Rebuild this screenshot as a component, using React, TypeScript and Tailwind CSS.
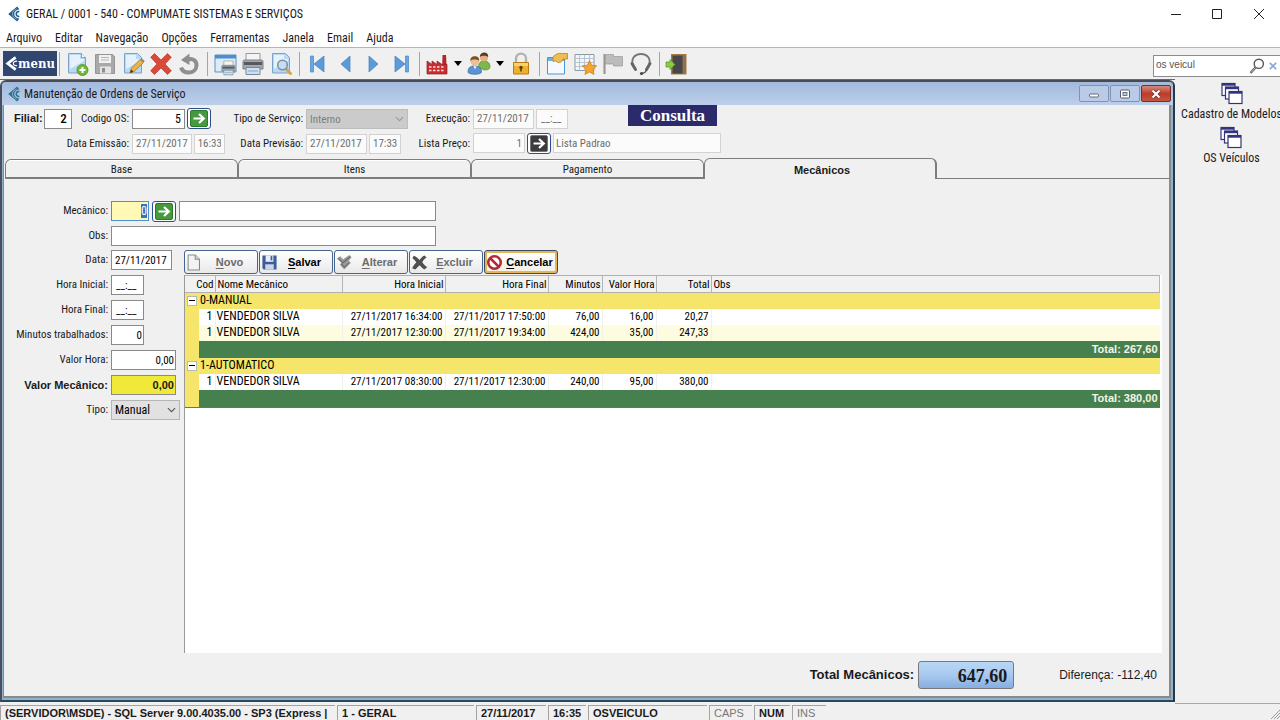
import { useEffect, useRef, type ReactNode } from "react";

const fieldBase =
  "h-5 min-w-0 border px-1 text-[11px] leading-4 outline-none rounded-none";
const fieldActive = fieldBase + " border-[#8a8a8a] bg-white text-black";
const fieldMuted = fieldBase + " border-[#d2d2d2] bg-[#fbfbfb] text-[#6e6e6e]";

/* ---------- icons ---------- */

function Logo({ className, color }: { className: string; color: string }) {
  return (
    <svg viewBox="0 0 13 18" className={className} aria-hidden="true">
      <path d="M0 9L10 .5l2.500 3.200Q6.800 5 6.800 9t5.700 5.300L10 17.500z" fill={color} />
      <path d="M12.500 6Q9 6.500 9 9t3.500 3" fill="none" stroke={color} strokeWidth="1.700" />
      <path d="M9.500 3.200Q4.600 5 4.600 9t4.900 5.800" fill="none" stroke="#d5e4ee" strokeWidth=".6" />
    </svg>
  );
}

function Svg({ children, size = "size-6" }: { children: ReactNode; size?: string }) {
  return (
    <svg viewBox="0 0 24 24" className={size} fill="none" aria-hidden="true">
      {children}
    </svg>
  );
}

const Page = () => (
  <path d="M3.500 1.500h13l4 4v15.500h-17z" fill="#b9d8f2" stroke="#7ba3c9" />
);

const NewIcon = () => (
  <Svg>
    <Page />
    <path d="M5 3h10v4h4v2L5 17z" fill="#e6f2fb" />
    <path d="M16.500 1.500v4h4" fill="#fff" stroke="#7ba3c9" />
    <circle cx="17.500" cy="18" r="5.500" fill="#6fb63c" stroke="#4e8f25" strokeWidth=".8" />
    <path d="M17.500 15v6M14.500 18h6" stroke="#fff" strokeWidth="2" />
  </Svg>
);
const SaveIcon = () => (
  <Svg>
    <path d="M2.500 2.500h17l2 2v17h-19z" fill="#a9a9a9" stroke="#959595" />
    <path d="M6 3h12v8H6z" fill="#f1f1f1" />
    <path d="M8 5.500h8M8 8h8" stroke="#b5b5b5" />
    <path d="M7 14.500h11v7H7z" fill="#e4e4e4" />
    <path d="M9 16h3v4.500H9z" fill="#8e8e8e" />
  </Svg>
);
const EditIcon = () => (
  <Svg>
    <Page />
    <path d="M5 3h10v4h4v2L5 17z" fill="#e6f2fb" />
    <path d="M9 21l1.500-5L19 7.500l3.500 3L13 19.500z" fill="#eeb24a" stroke="#a8742a" strokeWidth=".8" />
    <path d="M9 21l1-3.500 2.500 2.300z" fill="#4a3a2a" />
    <path d="M19 7.500l1.500-1.500 3.300 3-1.500 1.500z" fill="#8d8d8d" />
  </Svg>
);
const DeleteIcon = () => (
  <Svg>
    <path d="M5.500 1.500L12 8 18.500 1.500 22.300 5.300 16 12 22.300 18.800 18.500 22.500 12 16 5.500 22.500 1.700 18.800 8 12 1.700 5.300z" fill="#d94a3a" stroke="#b8362a" strokeWidth=".7" />
  </Svg>
);
const UndoIcon = () => (
  <Svg>
    <path d="M11 7.500c5-1.500 8.500 1.500 8.500 5.700 0 4.300-3.500 7.300-8 7.300-3.500 0-6.500-2-7.500-5" stroke="#8f8f8f" strokeWidth="4" />
    <path d="M12.500 1.500v11.500L4 8z" fill="#8f8f8f" />
  </Svg>
);
const PrinterBody = ({ t }: { t?: string }) => (
  <g transform={t}>
    <path d="M5 1.500h14V9H5z" fill="#f4f4f4" stroke="#999" />
    <path d="M2 9.500q0-1.500 1.500-1.500h17q1.500 0 1.500 1.500v7.500H2z" fill="#a4a8ad" stroke="#7c8086" />
    <path d="M3 10h18v3H3z" fill="#555a61" />
    <path d="M5 15.500h14v7H5z" fill="#c9e0f5" stroke="#7b8794" />
    <path d="M7 19h10" stroke="#86a9c6" />
  </g>
);
const PrintPreviewIcon = () => (
  <Svg>
    <path d="M2 3h21v17H2z" fill="#dcebf8" stroke="#5b8fc4" />
    <path d="M2 3h21v3.500H2z" fill="#4c8ed0" />
    <PrinterBody t="translate(7.500 8) scale(.66)" />
  </Svg>
);
const PrintIcon = () => (
  <Svg>
    <PrinterBody />
  </Svg>
);
const FindIcon = () => (
  <Svg>
    <Page />
    <path d="M5 3h10v4h4v2L5 17z" fill="#e6f2fb" />
    <path d="M17 17l4.500 4.500" stroke="#d9a050" strokeWidth="3" strokeLinecap="round" />
    <circle cx="13.500" cy="13" r="4.800" fill="#c4def5" stroke="#7d8e9d" strokeWidth="1.500" />
  </Svg>
);
const FirstIcon = () => (
  <Svg>
    <path d="M5.500 4h3v16h-3z" fill="#6ba6df" stroke="#4a84c0" strokeWidth=".7" />
    <path d="M19 4v16L9 12z" fill="#5b9bd8" stroke="#3f7fc0" strokeWidth=".7" />
  </Svg>
);
const PrevIcon = () => (
  <Svg>
    <path d="M17 4v16L8 12z" fill="#5b9bd8" stroke="#3f7fc0" strokeWidth=".7" />
  </Svg>
);
const NextIcon = () => (
  <Svg>
    <path d="M8 4v16l9-8z" fill="#5b9bd8" stroke="#3f7fc0" strokeWidth=".7" />
  </Svg>
);
const LastIcon = () => (
  <Svg>
    <path d="M16.500 4h3v16h-3z" fill="#6ba6df" stroke="#4a84c0" strokeWidth=".7" />
    <path d="M6 4v16l10-8z" fill="#5b9bd8" stroke="#3f7fc0" strokeWidth=".7" />
  </Svg>
);
const FactoryIcon = () => (
  <Svg>
    <path d="M17.500 3h3.500l1 18h-5z" fill="#b3262a" />
    <path d="M2 9l5 3.500V9l5 3.500V9l5 3.500h5V22H2z" fill="#c92f31" stroke="#8f1d20" strokeWidth=".7" />
    <path d="M4 15h16M4 18.500h16" stroke="#f7dede" strokeWidth="1.600" strokeDasharray="2.500 1.500" />
  </Svg>
);
const UsersIcon = () => (
  <Svg>
    <path d="M11.500 15c0-4 2-6 5.500-6s6 2 6 5.500-4 3.500-6 3.500z" fill="#7cb94a" stroke="#518a2a" strokeWidth=".7" />
    <circle cx="17" cy="5.500" r="4" fill="#e3b083" />
    <path d="M12.800 5c0-3 2-4.500 4.500-4.500S21.500 2 21.200 5c-2-1.500-6-2-8.400 0z" fill="#5c3a1c" />
    <path d="M1 20c0-4.500 2.500-6 6.500-6s7 1.500 7 6c0 3-13.500 3-13.500 0z" fill="#5c93d2" stroke="#35679f" strokeWidth=".7" />
    <circle cx="7.800" cy="9.500" r="4.300" fill="#ecc095" />
    <path d="M3.300 9c0-3.500 2-4.800 4.700-4.800s4.500 1.500 4.200 4.800c-2-1.800-6.500-2-8.900 0z" fill="#7a5025" />
    <path d="M6.500 14.200h3l-1.500 3z" fill="#fff" />
  </Svg>
);
const LockIcon = () => (
  <Svg>
    <path d="M7 12V6.500C7 0 17 0 17 6.500V12" stroke="#b3b3ad" strokeWidth="2.400" />
    <path d="M4.500 10.500h15V22h-15z" fill="#eeb02e" stroke="#b57d14" />
    <path d="M5 11h14v3H5z" fill="#f8d26c" />
    <circle cx="12" cy="15.500" r="1.700" fill="#5a4210" />
    <path d="M11.200 15.500h1.600v4h-1.600z" fill="#5a4210" />
  </Svg>
);
const NoteIcon = () => (
  <Svg>
    <path d="M2.500 5.500h17V22h-17z" fill="#f4faff" stroke="#4d95d6" />
    <path d="M3 6h16v3H3z" fill="#6cb0ea" />
    <path d="M8 5c3-3.500 6-4 9-3.500h5.500V7H18c-1 3-3 4-5 3.500L11 9 8 9.500z" fill="#efbd52" stroke="#b98425" strokeWidth=".8" />
  </Svg>
);
const FavoriteGridIcon = () => (
  <Svg>
    <path d="M2 2.500h19v16H2z" fill="#f4f6f8" stroke="#8a97a5" />
    <path d="M2 6.500h19M2 10.500h19M2 14.500h19M6.500 2.500v16M11.500 2.500v16M16.500 2.500v16" stroke="#b4bfca" strokeWidth=".9" />
    <path d="M16.500 8.500l2.200 4.700 5 .6-3.700 3.500 1 5.200-4.500-2.600-4.500 2.600 1-5.200-3.700-3.500 5-.6z" fill="#f6a42b" stroke="#c7741a" strokeWidth=".7" />
  </Svg>
);
const FlagIcon = () => (
  <Svg>
    <path d="M3.500 2v20" stroke="#999" strokeWidth="2.200" />
    <path d="M4.500 2.500h8v2h9v9.500h-9v-2h-8z" fill="#bcbcbc" stroke="#9a9a9a" strokeWidth=".7" />
  </Svg>
);
const HeadsetIcon = () => (
  <Svg>
    <path d="M4.500 15C1 6.500 6 2 12 2s11 4.500 7.500 13" stroke="#777" strokeWidth="1.900" />
    <path d="M3 11.500l3.500 6M21 11.500l-3.500 6" stroke="#666" strokeWidth="3" strokeLinecap="round" />
    <path d="M18 17.500c-1 2.500-2.500 3.500-5 4" stroke="#555" strokeWidth="1.300" />
    <circle cx="12.500" cy="21.500" r="1.600" fill="#444" />
  </Svg>
);
const ExitIcon = () => (
  <Svg>
    <path d="M6 2h15.500v20.500H6z" fill="#a9783f" />
    <path d="M7.500 3.500h11v18h-11z" fill="#47474b" />
    <path d="M17.500 3v19l3.500-1V3.500z" fill="#8b7355" />
    <path d="M1 10h4V7.500l5 5-5 5V15H1z" fill="#8ccc45" stroke="#578f23" strokeWidth=".7" />
  </Svg>
);
const Caret = () => (
  <svg viewBox="0 0 8 5" className="h-[5px] w-2" aria-hidden="true">
    <path d="M0 0h8L4 5z" fill="#000" />
  </svg>
);
const CascadeIcon = () => (
  <svg viewBox="0 0 22 22" className="h-[23px] w-[22px]" aria-hidden="true">
    {[[1, 1], [4.500, 4.500], [8, 9]].map(([x, y]) => (
      <g key={x}>
        <rect x={x} y={y} width="13" height="12" fill="#fff" stroke="#34347c" strokeWidth="1.200" />
        <rect x={x} y={y} width="13" height="2.200" fill="#34347c" />
      </g>
    ))}
  </svg>
);
const ChevronDown = ({ color }: { color: string }) => (
  <svg viewBox="0 0 10 6" className="pointer-events-none absolute top-[7px] right-1 h-[6px] w-[9px]" aria-hidden="true">
    <path d="M1 .8l4 4 4-4" fill="none" stroke={color} strokeWidth="1.200" />
  </svg>
);

/* small glyphs of the grid's command buttons */
const CmdNew = () => (
  <Svg size="size-[17px]">
    <path d="M3 1.500h10l6 6V22.500H3z" fill="#f3f3f3" stroke="#8a8a8a" strokeWidth="1.500" />
    <path d="M13 1.500v6h6" fill="#dadada" stroke="#8a8a8a" strokeWidth="1.500" />
  </Svg>
);
const CmdSave = () => (
  <Svg size="size-[17px]">
    <path d="M2 2h20v20H4l-2-2z" fill="#3d5c98" />
    <path d="M6.500 2h11v9h-11z" fill="#e9eef8" />
    <path d="M13.500 3h2.500v6h-2.500z" fill="#3d5c98" />
    <path d="M6 14.500h12V22H6z" fill="#c9d5ea" />
  </Svg>
);
const CmdEdit = () => (
  <Svg size="size-[17px]">
    <path d="M1 6.500l5-3.500 4 4.500L19 1.500l3 3-4 5 3 3-9.500 9.500-6-7 2.500-3z" fill="#9a9a9a" />
    <path d="M3.500 6.500l6 6L20 4M7.500 14l4.500 4.500 6.500-6" stroke="#6f6f6f" strokeWidth="1.800" />
  </Svg>
);
const CmdDelete = () => (
  <Svg size="size-[17px]">
    <path d="M4 2.500c3 1 6 4 8 6 2-3 4-5 7-6.500l3 3c-3 2-5 4-6 6.500 2 3 4 5 7 7l-4 3.500c-3-2-5-4-7-6-2 2-4 4-6 6l-4.500-2c2-4 4-6 6-8.500-2-2.500-3.500-4-5.500-6z" fill="#4f4f4f" />
  </Svg>
);
const CmdCancel = () => (
  <Svg size="size-[17px]">
    <circle cx="12" cy="12" r="8.800" fill="#fff" stroke="#b32a35" strokeWidth="3.600" />
    <path d="M6 6l12 12" stroke="#b32a35" strokeWidth="3.600" />
  </Svg>
);

/* ---------- parts ---------- */

function ToolButton({ label, children }: { label: string; children: ReactNode }) {
  return (
    <button type="button" aria-label={label} className="flex h-7 w-7 items-center justify-center">
      {children}
    </button>
  );
}
const DropButton = ({ label }: { label: string }) => (
  <button type="button" aria-label={label} className="flex h-7 w-[14px] items-center justify-center">
    <Caret />
  </button>
);
const Separator = () => <span className="mr-[3px] ml-1 h-6 w-px bg-[#a5a5a5]" />;

function GoButton({ label, dark = false }: { label: string; dark?: boolean }) {
  return (
    <button
      type="button"
      aria-label={label}
      className="flex h-[21px] w-6 shrink-0 items-center justify-center rounded-[3px] border border-[#2f4f8a] bg-white"
    >
      <svg viewBox="0 0 18 17" className="h-[17px] w-[18px]" aria-hidden="true">
        <rect x=".5" y=".5" width="17" height="16" rx="1.500" fill={dark ? "#3b3b3d" : "#449a3c"} stroke={dark ? "#777" : "#2f7a2b"} />
        <path d="M3.500 8.500h9.500M9 4l4.800 4.500L9 13" fill="none" stroke="#fff" strokeWidth="2.200" />
      </svg>
    </button>
  );
}

type CmdProps = { first: string; rest: string; icon: ReactNode; tone?: "off" | "on" | "focus" };
function Command({ first, rest, icon, tone = "off" }: CmdProps) {
  const skin = {
    off: "border-[#47648f] bg-linear-to-b from-white to-[#e9e9e9] text-[#6c6c6c]",
    on: "border-[#47648f] bg-linear-to-b from-white to-[#e9e9e9] text-black",
    focus: "border-[#3a4a66] bg-linear-to-b from-white to-[#f3efe2] text-black ring-2 ring-inset ring-[#e3b65a]",
  }[tone];
  return (
    <button
      type="button"
      disabled={tone === "off"}
      className={`flex h-6 w-[74px] items-center rounded-[3px] border pr-px pl-px font-['Liberation_Sans',sans-serif] text-[11px] font-bold ${skin}`}
    >
      {icon}
      <span className="flex-1 text-center">
        <span className="underline underline-offset-2">{first}</span>
        {rest}
      </span>
    </button>
  );
}

function FormRow({ id, label, bold = false, children }: { id: string; label: string; bold?: boolean; children: ReactNode }) {
  return (
    <div className="flex h-5 items-center gap-[3px]">
      <label
        htmlFor={id}
        className={
          bold
            ? "w-[103px] shrink-0 text-right font-['Liberation_Sans',sans-serif] font-bold whitespace-nowrap"
            : "w-[103px] shrink-0 pt-px text-right whitespace-nowrap"
        }
      >
        {label}
      </label>
      {children}
    </div>
  );
}

/* ---------- data ---------- */

const menus = ["Arquivo", "Editar", "Navegação", "Opções", "Ferramentas", "Janela", "Email", "Ajuda"];

type Entry = { cod: string; nome: string; inicio: string; fim: string; minutos: string; valor: string; total: string };
const groups: { name: string; total: string; rows: Entry[] }[] = [
  {
    name: "0-MANUAL",
    total: "Total: 267,60",
    rows: [
      { cod: "1", nome: "VENDEDOR SILVA", inicio: "27/11/2017 16:34:00", fim: "27/11/2017 17:50:00", minutos: "76,00", valor: "16,00", total: "20,27" },
      { cod: "1", nome: "VENDEDOR SILVA", inicio: "27/11/2017 12:30:00", fim: "27/11/2017 19:34:00", minutos: "424,00", valor: "35,00", total: "247,33" },
    ],
  },
  {
    name: "1-AUTOMATICO",
    total: "Total: 380,00",
    rows: [
      { cod: "1", nome: "VENDEDOR SILVA", inicio: "27/11/2017 08:30:00", fim: "27/11/2017 12:30:00", minutos: "240,00", valor: "95,00", total: "380,00" },
    ],
  },
];

/* ---------- page sections ---------- */

function ServiceHeader() {
  return (
    <div className="grid grid-cols-[124px_93px_75px_102px_59px_minmax(0,1fr)] grid-rows-[27px_21px] items-center gap-x-[3px] gap-y-px">
      <div className="flex items-center justify-between pl-[9px]">
        <span className="flex items-center gap-px">
          <label htmlFor="filial" className="font-['Liberation_Sans',sans-serif] font-bold">Filial:</label>
          <input id="filial" defaultValue="2" className={`${fieldActive} w-7 text-right text-[13px]! font-medium`} />
        </span>
        <label htmlFor="os" className="pt-[2px]">Codigo OS:</label>
      </div>
      <div className="flex items-center gap-[2px]">
        <input id="os" defaultValue="5" className={`${fieldActive} w-[53px] px-[3px]! text-right text-[12px]!`} />
        <GoButton label="Buscar OS" />
      </div>
      <label htmlFor="tipo-servico" className="pt-[2px] text-right">Tipo de Serviço:</label>
      <div className="relative">
        <select id="tipo-servico" disabled className="h-5 w-full appearance-none border border-[#bdbdbd] bg-[#cbcbcb] px-[3px] pt-[2px] text-[11px] text-[#7d7d7d] opacity-100">
          <option>Interno</option>
        </select>
        <ChevronDown color="#999" />
      </div>
      <label htmlFor="execucao" className="pt-[2px] text-right">Execução:</label>
      <div className="flex h-full items-center gap-[2px]">
        <input id="execucao" defaultValue="27/11/2017" className={`${fieldMuted} w-[61px] px-[3px]!`} />
        <input aria-label="Hora de execução" defaultValue="__:__" className={`${fieldMuted} w-8`} />
        <strong className="ml-[58px] flex h-[21px] w-[89px] items-center justify-center self-start bg-[#2b2b6b] font-['Liberation_Serif',serif] text-[17px] leading-5 text-white">
          Consulta
        </strong>
      </div>

      <label htmlFor="emissao" className="pt-[2px] text-right">Data Emissão:</label>
      <div className="flex gap-[2px]">
        <input id="emissao" defaultValue="27/11/2017" className={`${fieldMuted} w-[61px] px-[3px]!`} />
        <input aria-label="Hora de emissão" defaultValue="16:33" className={`${fieldMuted} w-8 px-[3px]!`} />
      </div>
      <label htmlFor="previsao" className="pt-[2px] text-right">Data Previsão:</label>
      <div className="flex gap-[2px]">
        <input id="previsao" defaultValue="27/11/2017" className={`${fieldMuted} w-[61px] px-[3px]!`} />
        <input aria-label="Hora prevista" defaultValue="17:33" className={`${fieldMuted} w-8 px-[3px]!`} />
      </div>
      <label htmlFor="lista" className="pt-[2px] text-right">Lista Preço:</label>
      <div className="flex gap-[2px]">
        <input id="lista" defaultValue="1" className={`${fieldMuted} w-[52px] px-[2px]! text-right`} />
        <GoButton label="Buscar lista" dark />
        <input aria-label="Nome da lista" defaultValue="Lista Padrao" className={`${fieldMuted} w-[168px] px-[2px]!`} />
      </div>
    </div>
  );
}

function Tabs() {
  const tabs = ["Base", "Itens", "Pagamento"];
  return (
    <div role="tablist" className="mt-1 flex h-[21px] items-end">
      {tabs.map((t) => (
        <button
          key={t}
          type="button"
          role="tab"
          aria-selected="false"
          className="h-5 w-[233px] rounded-t-[6px] border border-b-2 border-[#7d7d7d] bg-[#f0f0f0] pt-[2px] text-center shadow-[inset_0_1px_0_#fff]"
        >
          {t}
        </button>
      ))}
      <button
        type="button"
        role="tab"
        aria-selected="true"
        className="h-[21px] w-[233px] rounded-t-[6px] border-t border-r-2 border-l border-[#7d7d7d] bg-[#f0f0f0] pt-[2px] pl-1 text-center font-['Liberation_Sans',sans-serif] font-bold"
      >
        Mecânicos
      </button>
      <span className="h-0 flex-1 border-b border-[#7d7d7d]" />
    </div>
  );
}

function EntriesTable() {
  const num = "border-r border-[#f1f1ec] pr-[2px] text-right";
  const head = "border-r border-[#b4b4b4] pr-px font-normal";
  return (
    <table className="w-full table-fixed border-collapse text-[11px] leading-[15px] whitespace-nowrap text-black">
      <colgroup>
        <col className="w-[14px]" />
        <col className="w-4" />
        <col className="w-[127px]" />
        <col className="w-[103px]" />
        <col className="w-[103px]" />
        <col className="w-[54px]" />
        <col className="w-[54px]" />
        <col className="w-[55px]" />
        <col />
      </colgroup>
      <thead>
        <tr className="h-[17px] border-y border-[#b0b0b0] bg-[#f1f1f1]">
          <th scope="col" colSpan={2} className={`${head} text-right`}>Cod</th>
          <th scope="col" className={`${head} pl-[2px] text-left`}>Nome Mecânico</th>
          <th scope="col" className={`${head} text-right`}>Hora Inicial</th>
          <th scope="col" className={`${head} text-right`}>Hora Final</th>
          <th scope="col" className={`${head} text-right`}>Minutos</th>
          <th scope="col" className={`${head} text-right`}>Valor Hora</th>
          <th scope="col" className={`${head} text-right`}>Total</th>
          <th scope="col" className={`${head} pl-[2px] text-left`}>Obs</th>
        </tr>
      </thead>
      {groups.map((g) => (
        <tbody key={g.name}>
          <tr className="h-4 bg-[#f6e56b]">
            <td className="pl-[2px]">
              <button type="button" aria-label={`Recolher ${g.name}`} className="flex size-[10px] items-center justify-center border border-[#b9b9b9] bg-white">
                <span className="h-px w-[6px] bg-black" />
              </button>
            </td>
            <td colSpan={8} className="pl-px text-[12px]">{g.name}</td>
          </tr>
          {g.rows.map((r, i) => (
            <tr key={r.inicio} className={i % 2 ? "h-4 bg-[#fdfbe0]" : "h-4 bg-white"}>
              <td className="bg-[#f6e56b]" />
              <td className={`${num} text-[12px]`}>{r.cod}</td>
              <td className="border-r border-[#f1f1ec] pl-px text-[12px]">{r.nome}</td>
              <td className={num}>{r.inicio}</td>
              <td className={num}>{r.fim}</td>
              <td className={num}>{r.minutos}</td>
              <td className={num}>{r.valor}</td>
              <td className={num}>{r.total}</td>
              <td />
            </tr>
          ))}
          <tr className="h-[17px]">
            <td className="bg-[#f6e56b]" />
            <td colSpan={8} className="bg-[#47804f] pr-[2px] text-right font-['Liberation_Sans',sans-serif] font-bold text-[#f4f4e4]">
              {g.total}
            </td>
          </tr>
        </tbody>
      ))}
    </table>
  );
}

function MechanicPanel() {
  const codeRef = useRef<HTMLInputElement>(null);
  useEffect(() => {
    codeRef.current?.focus();
    codeRef.current?.select();
  }, []);
  return (
    <div role="tabpanel" className="flex flex-1 flex-col pt-[22px]">
      <div className="flex flex-col gap-[5px]">
        <FormRow id="mecanico" label="Mecânico:">
          <input
            id="mecanico"
            ref={codeRef}
            defaultValue="0"
            className="h-5 w-[38px] min-w-0 border border-[#4d8fd0] bg-[#fff9b5] px-px text-right text-[12px] outline-none selection:bg-[#3873bd] selection:text-white"
          />
          <span className="flex gap-[3px]">
            <GoButton label="Buscar mecânico" />
            <input aria-label="Nome do mecânico" className={`${fieldActive} w-[257px]`} />
          </span>
        </FormRow>
        <FormRow id="obs" label="Obs:">
          <input id="obs" className={`${fieldActive} w-[325px]`} />
        </FormRow>
      </div>

      <div className="flex flex-1 pt-1">
        <div className="flex w-[179px] shrink-0 flex-col gap-[5px]">
          <FormRow id="data" label="Data:">
            <input id="data" defaultValue="27/11/2017" className={`${fieldActive} w-[61px] px-[3px]!`} />
          </FormRow>
          <FormRow id="hora-inicial" label="Hora Inicial:">
            <input id="hora-inicial" defaultValue="__:__" className={`${fieldActive} w-[33px]`} />
          </FormRow>
          <FormRow id="hora-final" label="Hora Final:">
            <input id="hora-final" defaultValue="__:__" className={`${fieldActive} w-[33px]`} />
          </FormRow>
          <FormRow id="minutos" label="Minutos trabalhados:">
            <input id="minutos" defaultValue="0" className={`${fieldActive} w-[33px] px-px! text-right`} />
          </FormRow>
          <FormRow id="valor-hora" label="Valor Hora:">
            <input id="valor-hora" defaultValue="0,00" className={`${fieldActive} w-[65px] px-px! text-right`} />
          </FormRow>
          <FormRow id="valor-mec" label="Valor Mecânico:" bold>
            <input
              id="valor-mec"
              defaultValue="0,00"
              className="h-5 w-[65px] min-w-0 border border-[#8a8a8a] bg-[#f1e93a] px-px text-right font-['Liberation_Sans',sans-serif] text-[11px] font-bold outline-none"
            />
          </FormRow>
          <FormRow id="tipo" label="Tipo:">
            <div className="relative">
              <select id="tipo" className="h-5 w-[69px] appearance-none border border-[#b5b5b5] bg-[#e1e1e1] px-[3px] text-[12px] text-black">
                <option>Manual</option>
              </select>
              <ChevronDown color="#555" />
            </div>
          </FormRow>
        </div>

        <div className="flex min-w-0 flex-1 flex-col pr-[7px]">
          <div className="flex h-[25px] gap-px">
            <Command first="N" rest="ovo" icon={<CmdNew />} />
            <Command first="S" rest="alvar" icon={<CmdSave />} tone="on" />
            <Command first="A" rest="lterar" icon={<CmdEdit />} />
            <Command first="E" rest="xcluir" icon={<CmdDelete />} />
            <Command first="C" rest="ancelar" icon={<CmdCancel />} tone="focus" />
          </div>
          <div className="flex-1 border-l border-[#9a9a9a] bg-white pr-[2px]">
            <div className="border-b border-[#6f6f6f]">
              <EntriesTable />
            </div>
          </div>
        </div>
      </div>

      <div className="flex h-[43px] items-center justify-end pr-3 font-['Liberation_Sans',sans-serif]">
        <span className="text-[13px] font-bold">Total Mecânicos:</span>
        <output className="mr-[45px] ml-1 h-7 w-24 rounded-[3px] border border-[#77797f] bg-linear-to-b from-[#b9d8f5] via-[#a9c8ef] to-[#86aee0] pr-[6px] text-right font-['Liberation_Serif',serif] text-[18px] leading-[28px] font-bold">
          647,60
        </output>
        <span className="text-[12px]">Diferença: -112,40</span>
      </div>
    </div>
  );
}

function StatusPanel({ children, className }: { children: ReactNode; className: string }) {
  return (
    <span className={`h-[15px] border-t border-l border-[#a3a3a3] px-1 leading-[15px] whitespace-nowrap ${className}`}>
      {children}
    </span>
  );
}

export default function App() {
  const mdiButton = "flex h-[17px] w-[30px] items-center justify-center rounded-[2px] border";
  return (
    <div className="flex h-screen flex-col overflow-hidden bg-[#f0f0f0] font-['Roboto_Condensed','Liberation_Sans',sans-serif] text-[11px] text-[#1a1a1a]">
      <header className="bg-white">
        <div className="flex h-7 items-center pl-2 text-[12px]">
          <Logo className="h-4 w-3" color="#1f5f8f" />
          <h1 className="ml-[6px] flex-1">GERAL / 0001 - 540 - COMPUMATE SISTEMAS E SERVIÇOS</h1>
          <button type="button" aria-label="Minimizar" className="flex w-[41px] justify-center">
            <svg viewBox="0 0 10 10" className="size-[10px]"><path d="M0 5.500h10" stroke="#222" /></svg>
          </button>
          <button type="button" aria-label="Maximizar" className="flex w-[41px] justify-center">
            <svg viewBox="0 0 10 10" className="size-[10px]"><path d="M.5 .5h9v9h-9z" fill="none" stroke="#222" /></svg>
          </button>
          <button type="button" aria-label="Fechar" className="flex w-[43px] justify-center">
            <svg viewBox="0 0 10 10" className="size-[10px]"><path d="M0 0l10 10M10 0L0 10" stroke="#222" /></svg>
          </button>
        </div>
        <nav className="flex h-5 items-center gap-[13px] border-b border-[#b5b5b5] pl-[6px] text-[12px]">
          {menus.map((m) => (
            <button key={m} type="button">{m}</button>
          ))}
        </nav>
      </header>

      <div className="flex h-[31px] shrink-0 items-center pl-[3px]">
        <button type="button" className="flex h-[25px] w-[54px] items-center justify-center bg-[#31466f] font-['DejaVu_Serif_Condensed','DejaVu_Serif',serif] text-[13px] leading-none font-bold text-white">
          <svg viewBox="0 0 14 16" className="h-[15px] w-[13px] shrink-0" aria-hidden="true">
            <path d="M11.500 1.500L3 8l8.500 6.500" fill="none" stroke="#fff" strokeWidth="3" />
            <path d="M13 5.500q-4 .3-4 2.500t4 2.500" fill="none" stroke="#fff" strokeWidth="1.200" />
          </svg>
          menu
        </button>
        <span className="ml-[2px] h-6 w-px bg-[#a5a5a5]" />
        <span className="w-[3px]" />
        <ToolButton label="Novo"><NewIcon /></ToolButton>
        <ToolButton label="Salvar"><SaveIcon /></ToolButton>
        <ToolButton label="Editar"><EditIcon /></ToolButton>
        <ToolButton label="Excluir"><DeleteIcon /></ToolButton>
        <ToolButton label="Desfazer"><UndoIcon /></ToolButton>
        <Separator />
        <ToolButton label="Visualizar impressão"><PrintPreviewIcon /></ToolButton>
        <ToolButton label="Imprimir"><PrintIcon /></ToolButton>
        <ToolButton label="Localizar"><FindIcon /></ToolButton>
        <Separator />
        <ToolButton label="Primeiro"><FirstIcon /></ToolButton>
        <ToolButton label="Anterior"><PrevIcon /></ToolButton>
        <ToolButton label="Próximo"><NextIcon /></ToolButton>
        <ToolButton label="Último"><LastIcon /></ToolButton>
        <Separator />
        <ToolButton label="Empresa"><FactoryIcon /></ToolButton>
        <DropButton label="Escolher empresa" />
        <ToolButton label="Usuários"><UsersIcon /></ToolButton>
        <DropButton label="Escolher usuário" />
        <ToolButton label="Bloquear"><LockIcon /></ToolButton>
        <Separator />
        <ToolButton label="Anotações"><NoteIcon /></ToolButton>
        <ToolButton label="Favoritos"><FavoriteGridIcon /></ToolButton>
        <ToolButton label="Marcar"><FlagIcon /></ToolButton>
        <ToolButton label="Suporte"><HeadsetIcon /></ToolButton>
        <Separator />
        <ToolButton label="Sair"><ExitIcon /></ToolButton>
        <form className="mt-1 ml-auto flex h-[22px] w-[127px] items-center border border-r-0 border-[#8c8c8c] bg-white" onSubmit={(e) => e.preventDefault()}>
          <input aria-label="Pesquisar" defaultValue="os veicul" className="min-w-0 flex-1 pb-[2px] pl-[2px] font-['Liberation_Sans',sans-serif] text-[10px] text-[#555] outline-none" />
          <button type="submit" aria-label="Buscar">
            <svg viewBox="0 0 16 16" className="size-4" fill="none"><circle cx="9.800" cy="5.800" r="4.600" stroke="#555" strokeWidth="1.400" /><path d="M6.500 9.500L1.500 15" stroke="#555" strokeWidth="2.400" /><path d="M6.300 9.700L2 14.500" stroke="#eee" strokeWidth=".8" /></svg>
          </button>
          <button type="button" aria-label="Limpar" className="mr-[3px] ml-1">
            <svg viewBox="0 0 8 8" className="size-2"><path d="M.8 .8l6.400 6.400M7.200 .8L.8 7.200" stroke="#8aa8d8" strokeWidth="1.700" /></svg>
          </button>
        </form>
      </div>

      <div className="flex min-h-0 flex-1">
        <main className="flex min-w-0 flex-1 flex-col border-t border-[#6a6a6a] bg-[#f0f0f0] pb-[3px]">
          <section className="flex flex-1 flex-col rounded-t-[6px] border-2 border-t-[#4a4a52] border-r-[#27384a] border-b-[#27485e] border-l-[#4a4f5e] bg-[#8fb3cb]">
            <div className="flex h-[23px] items-center rounded-t-[4px] bg-linear-to-b from-[#a3b9dc] to-[#bccfea] pr-[2px] pl-[6px] text-[12px]">
              <Logo className="h-4 w-3" color="#2d7090" />
              <h2 className="ml-1 flex-1">Manutenção de Ordens de Serviço</h2>
              <div className="flex gap-px">
                <button type="button" aria-label="Minimizar janela" className={`${mdiButton} border-[#7f93b5] bg-[#b9cbe6]`}>
                  <svg viewBox="0 0 12 10" className="h-[10px] w-3"><rect x="1.500" y="5" width="9" height="3" rx="1" fill="#fff" stroke="#555c6b" strokeWidth=".9" /></svg>
                </button>
                <button type="button" aria-label="Restaurar janela" className={`${mdiButton} border-[#7f93b5] bg-[#b9cbe6]`}>
                  <svg viewBox="0 0 12 10" className="h-[10px] w-3"><rect x="1.500" y="1" width="9" height="8" rx="1" fill="#fff" stroke="#555c6b" strokeWidth="1" /><rect x="4" y="3.500" width="4" height="3" fill="#b9cbe6" stroke="#555c6b" strokeWidth=".8" /></svg>
                </button>
                <button type="button" aria-label="Fechar janela" className={`${mdiButton} border-[#7c2b25] bg-linear-to-b from-[#d58a7c] via-[#bd3b2a] to-[#c4553f]`}>
                  <svg viewBox="0 0 12 10" className="h-[10px] w-3"><path d="M2.500 1.500l7 7M9.500 1.500l-7 7" stroke="#6a2a25" strokeWidth="3.600" /><path d="M2.500 1.500l7 7M9.500 1.500l-7 7" stroke="#fff" strokeWidth="2.200" /></svg>
                </button>
              </div>
            </div>
            <div className="mr-[2px] mb-[2px] ml-px flex flex-1 flex-col border-r-2 border-b-2 border-l border-[#8a8a8a] bg-[#f0f0f0] pl-px">
              <ServiceHeader />
              <Tabs />
              <MechanicPanel />
            </div>
          </section>
        </main>
        <aside className="mb-px flex w-[105px] shrink-0 flex-col items-center gap-px border-b border-[#a8a8a8] pt-[3px] pl-2 text-[12px]">
          <a href="#modelos" className="flex flex-col items-center whitespace-nowrap">
            <CascadeIcon />
            <span className="h-5 leading-[18px]">Cadastro de Modelos</span>
          </a>
          <a href="#os-veiculos" className="flex flex-col items-center whitespace-nowrap">
            <CascadeIcon />
            <span className="leading-[18px]">OS Veículos</span>
          </a>
        </aside>
      </div>

      <footer className="flex h-[15px] shrink-0 gap-[2px] font-['Liberation_Sans',sans-serif] font-bold">
        <StatusPanel className="w-[335px]">(SERVIDOR\MSDE) - SQL Server 9.00.4035.00 - SP3 (Express |</StatusPanel>
        <StatusPanel className="w-[137px]">1 - GERAL</StatusPanel>
        <StatusPanel className="w-[70px]">27/11/2017</StatusPanel>
        <StatusPanel className="w-[38px]">16:35</StatusPanel>
        <StatusPanel className="w-[119px]">OSVEICULO</StatusPanel>
        <StatusPanel className="w-[43px] font-normal text-[#777]">CAPS</StatusPanel>
        <StatusPanel className="w-9">NUM</StatusPanel>
        <StatusPanel className="w-[34px] font-normal text-[#777]">INS</StatusPanel>
        <svg viewBox="0 0 10 10" className="mt-1 ml-auto size-[10px]" aria-hidden="true">
          <path d="M1 10l9-9M4 10l6-6M7 10l3-3" stroke="#9a9a9a" />
        </svg>
      </footer>
    </div>
  );
}
